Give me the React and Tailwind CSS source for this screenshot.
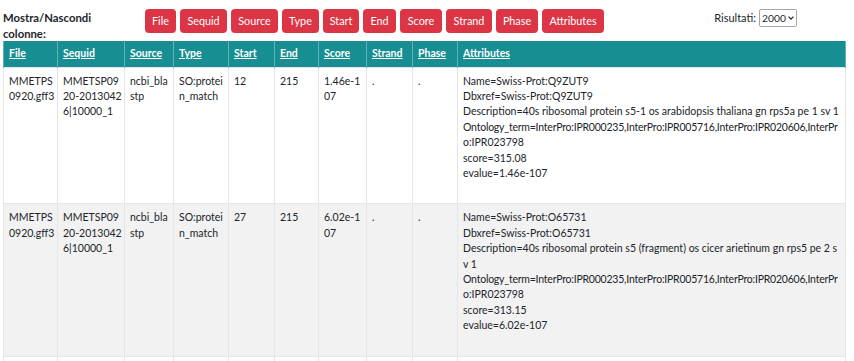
const columns = [
  { name: "File", w: "w-[54px]", bw: "w-[31px]" },
  { name: "Sequid", w: "w-[67px]", bw: "w-[47px]" },
  { name: "Source", w: "w-[49px]", bw: "w-[47px]" },
  { name: "Type", w: "w-[55px]", bw: "w-[37px]" },
  { name: "Start", w: "w-[46px]", bw: "w-[36px]" },
  { name: "End", w: "w-[44px]", bw: "w-[33px]" },
  { name: "Score", w: "w-[48px]", bw: "w-[42px]" },
  { name: "Strand", w: "w-[46px]", bw: "w-[46px]" },
  { name: "Phase", w: "w-[45px]", bw: "w-[42px]" },
  { name: "Attributes", w: "w-[388px]", bw: "w-[62px]" },
];

// la riga lunga con le cifre va stretta un po'
const ontology = [
  { text: "Ontology_term=InterPro:IPR000235,InterPro:IPR005716,InterPro:IPR020606,InterPr", tight: true },
  "o:IPR023798",
];

const rows = [
  {
    cells: [
      ["MMETPS", "0920.gff3"],
      ["MMETSP09", "20-2013042", "6|10000_1"],
      ["ncbi_bla", "stp"],
      ["SO:protei", "n_match"],
      ["12"],
      ["215"],
      ["1.46e-1", "07"],
      ["."],
      ["."],
    ],
    attributes: [
      "Name=Swiss-Prot:Q9ZUT9",
      "Dbxref=Swiss-Prot:Q9ZUT9",
      "Description=40s ribosomal protein s5-1 os arabidopsis thaliana gn rps5a pe 1 sv 1",
      ...ontology,
      "score=315.08",
      "evalue=1.46e-107",
    ],
  },
  {
    cells: [
      ["MMETPS", "0920.gff3"],
      ["MMETSP09", "20-2013042", "6|10000_1"],
      ["ncbi_bla", "stp"],
      ["SO:protei", "n_match"],
      ["27"],
      ["215"],
      ["6.02e-1", "07"],
      ["."],
      ["."],
    ],
    attributes: [
      "Name=Swiss-Prot:O65731",
      "Dbxref=Swiss-Prot:O65731",
      "Description=40s ribosomal protein s5 (fragment) os cicer arietinum gn rps5 pe 2 s",
      "v 1",
      ...ontology,
      "score=313.15",
      "evalue=6.02e-107",
    ],
  },
  {
    cells: [
      ["MMETPS", "0920.gff3"],
      ["MMETSP09", "20-2013042", "6|10000_1"],
      ["ncbi_bla", "stp"],
      ["SO:protei", "n_match"],
      ["30"],
      ["215"],
      ["2.11e-1", "06"],
      ["."],
      ["."],
    ],
    attributes: [
      "Name=Swiss-Prot:P46294",
      "Dbxref=Swiss-Prot:P46294",
      "Description=40s ribosomal protein s5 os nicotiana tabacum gn rps5 pe 2 sv 1",
      ...ontology,
      "score=311.22",
      "evalue=2.11e-106",
    ],
  },
];

function Lines({ lines }) {
  return lines.map((l, k) =>
    typeof l === "string" ? (
      <div key={k} className="whitespace-nowrap">
        {l}
      </div>
    ) : (
      <div key={k} className="whitespace-nowrap tracking-[-0.22px]">
        {l.text}
      </div>
    )
  );
}

function App() {
  return (
    <div className="font-['Lato',sans-serif] text-[10.5px] leading-[15.4px] text-[#212529] bg-white min-h-screen">
      {/* barra dei controlli */}
      <div className="flex items-start h-[41px] pt-[9px] pl-[3px] pr-[57px]">
        <div className="relative z-10 w-[142px] font-bold text-[11.3px] leading-[16px] pt-[1px]">
          Mostra/Nascondi
          <br />
          colonne:
        </div>
        <div className="flex gap-[4px]">
          {columns.map((c) => (
            <button
              key={c.name}
              className={`${c.bw} h-[24px] bg-[#dc3545] text-white text-[10.8px] rounded-[4px] leading-none`}
            >
              {c.name}
            </button>
          ))}
        </div>
        <div className="ml-auto flex items-center gap-[3px] text-[11px]">
          <span>Risultati:</span>
          <div className="relative">
            <select className="appearance-none w-[38px] h-[18px] border border-[#a6a6a6] rounded-[2px] leading-none pl-[2px] text-[10.3px] bg-white">
              <option>2000</option>
            </select>
            <svg
              className="absolute right-[3px] top-[7px] pointer-events-none"
              width="6"
              height="4"
              viewBox="0 0 6 4"
            >
              <path d="M0.6 0.6 L3 3.1 L5.4 0.6" fill="none" stroke="#222" strokeWidth="1.2" />
            </svg>
          </div>
        </div>
      </div>

      <table className="ml-[3px] w-[842px] table-fixed border-collapse">
        <thead>
          <tr className="bg-[#168e92] text-white">
            {columns.map((c) => (
              <th
                key={c.name}
                className={`${c.w} text-left font-bold underline px-[5px] py-[5px] border-x border-[#5fb3b6] h-[26px]`}
              >
                {c.name}
              </th>
            ))}
          </tr>
        </thead>
        <tbody>
          {rows.map((r, i) => (
            <tr key={i} className={i % 2 === 1 ? "bg-[#f2f2f2]" : "bg-white"}>
              {r.cells.map((v, j) => (
                <td key={j} className="align-top px-[5px] pt-[6px] border border-[#e4e6e8]">
                  <Lines lines={v} />
                </td>
              ))}
              <td className="align-top px-[5px] pt-[6px] pb-[5px] border border-[#e4e6e8]">
                <div className="mb-[17px]">
                  <Lines lines={r.attributes} />
                </div>
              </td>
            </tr>
          ))}
        </tbody>
      </table>
    </div>
  );
}

export default App;
